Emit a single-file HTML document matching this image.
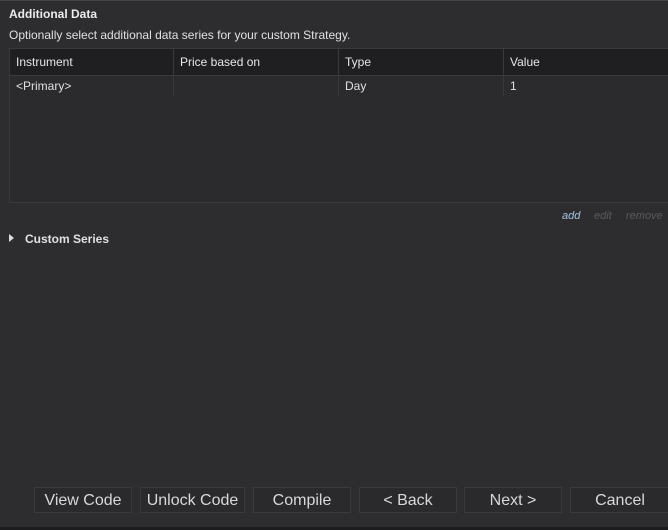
<!DOCTYPE html>
<html><head><style>
body{margin:0;width:668px;height:530px;background:#2d2d30;overflow:hidden;position:relative;font-family:"Liberation Sans",Arial,sans-serif;font-size:12px;color:#e0e0e0}
.a{position:absolute}
.btn{position:absolute;top:487px;height:26px;border:1px solid #3a3a3d;background:#2a2a2d;color:#d8d8d8;font-size:16px;text-align:center;line-height:26px;box-sizing:border-box}
.hd{position:absolute;top:49px;height:26px;background:#1f1f21;line-height:26px;font-size:12px;color:#e6e6e6;padding-left:6px;box-sizing:border-box;border-right:1px solid #3a3a3c}
.cell{position:absolute;top:76px;height:20px;line-height:20px;padding-left:6px;box-sizing:border-box;border-right:1px solid #38383a}
</style></head><body>
<div class="a" style="left:0;top:0;width:668px;height:1px;background:#444"></div>
<div class="a" style="left:9px;top:7px;font-weight:bold;font-size:12px;color:#ececec">Additional Data</div>
<div class="a" style="left:9px;top:28px;font-size:12px;color:#e0e0e0">Optionally select additional data series for your custom Strategy.</div>
<div class="a" style="left:9px;top:48px;width:659px;height:155px;border:1px solid #3a3a3c;border-right:none;box-sizing:border-box;background:#2b2b2e"></div>
<div class="hd" style="left:10px;width:164px">Instrument</div>
<div class="hd" style="left:174px;width:165px">Price based on</div>
<div class="hd" style="left:339px;width:165px">Type</div>
<div class="hd" style="left:504px;width:164px;border-right:none">Value</div>
<div class="a" style="left:10px;top:75px;width:658px;height:1px;background:#3a3a3c"></div>
<div class="cell" style="left:10px;width:164px">&lt;Primary&gt;</div>
<div class="cell" style="left:174px;width:165px"></div>
<div class="cell" style="left:339px;width:165px">Day</div>
<div class="cell" style="left:504px;width:164px;border-right:none">1</div>
<div class="a" style="left:562px;top:210px;font-style:italic;font-size:11px;color:#a8c4e0">add</div>
<div class="a" style="left:594px;top:210px;font-style:italic;font-size:11px;color:#5a5a5e">edit</div>
<div class="a" style="left:626px;top:210px;font-style:italic;font-size:11px;color:#5a5a5e">remove</div>
<div class="a" style="left:9px;top:234px;width:0;height:0;border-top:4px solid transparent;border-bottom:4px solid transparent;border-left:5px solid #ddd"></div>
<div class="a" style="left:25px;top:232px;font-weight:bold;font-size:12px;color:#e0e0e0">Custom Series</div>
<div class="btn" style="left:34px;width:98px">View Code</div>
<div class="btn" style="left:140px;width:105px">Unlock Code</div>
<div class="btn" style="left:253px;width:98px">Compile</div>
<div class="btn" style="left:359px;width:98px">&lt; Back</div>
<div class="btn" style="left:464px;width:98px">Next &gt;</div>
<div class="btn" style="left:570px;width:100px">Cancel</div>
<div class="a" style="left:0;top:527px;width:668px;height:3px;background:#1c1c1e"></div>
</body></html>
